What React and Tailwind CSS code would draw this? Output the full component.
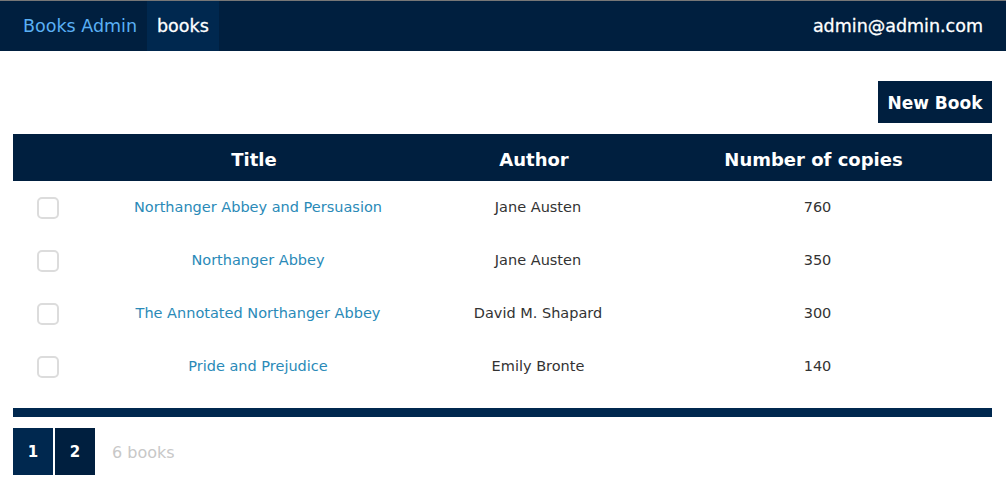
import React from 'react';

const books = [
  { id: 1, title: 'Northanger Abbey and Persuasion', author: 'Jane Austen', copies: 760 },
  { id: 2, title: 'Northanger Abbey', author: 'Jane Austen', copies: 350 },
  { id: 3, title: 'The Annotated Northanger Abbey', author: 'David M. Shapard', copies: 300 },
  { id: 4, title: 'Pride and Prejudice', author: 'Emily Bronte', copies: 140 },
];

const cols = 'grid grid-cols-[70px_350px_202px_1fr] items-center';

const App = () => {
  return (
    <div className="min-h-screen bg-white font-['DejaVu_Sans',sans-serif]">
      <nav className="flex h-[51px] items-stretch justify-between border-t border-[#777] bg-[#001f3f]">
        <div className="flex items-stretch">
          <a className="flex items-center pl-[23px] pr-[10px] text-[17.5px] text-[#5ab0f5]">Books Admin</a>
          <a className="flex items-center bg-[#00284f] px-[10px] text-[17.5px] font-medium text-white [-webkit-text-stroke:0.3px_white]">books</a>
        </div>
        <div className="flex items-center pr-[23px] text-[17.5px] text-white [-webkit-text-stroke:0.3px_white]">admin@admin.com</div>
      </nav>

      <div className="px-[13px] pr-[14px]">
        <div className="mt-[30px] flex justify-end">
          <button className="h-[42px] w-[114px] bg-[#001f3f] pt-[3px] text-[17px] font-bold text-white">New Book</button>
        </div>

        <div className="mt-[11px]">
          <div className={`${cols} h-[47px] bg-[#001f3f] pt-[4px] text-[18px] font-bold text-white`}>
            <div></div>
            <div className="pr-[8px] text-center">Title</div>
            <div className="text-center">Author</div>
            <div className="text-center">Number of copies</div>
          </div>
          {books.map(book => (
            <div key={book.id} className={`${cols} h-[53px] text-[14.5px]`}>
              <div className="pl-[24px]">
                <div className="h-[22px] w-[22px] rounded-[5px] border-2 border-[#dcdcdc]"></div>
              </div>
              <div className="pt-[1px] text-center text-[#2a8ab8]">{book.title}</div>
              <div className="pl-[8px] pt-[1px] text-center text-[#333]">{book.author}</div>
              <div className="pl-[8px] pt-[1px] text-center text-[#333]">{book.copies}</div>
            </div>
          ))}
          <div className="mt-[15px] h-[9px] bg-[#00284f]"></div>
        </div>

        <div className="mt-[11px] flex items-center">
          <button className="h-[47px] w-[40px] bg-[#00284f] pt-[2px] text-[15px] font-bold text-white">1</button>
          <button className="ml-[2px] h-[47px] w-[40px] bg-[#001f3f] pt-[2px] text-[15px] font-bold text-white">2</button>
          <span className="ml-[17px] pt-[3px] text-[16px] text-[#c8c8c8]">6 books</span>
        </div>
      </div>
    </div>
  );
};

export default App;
